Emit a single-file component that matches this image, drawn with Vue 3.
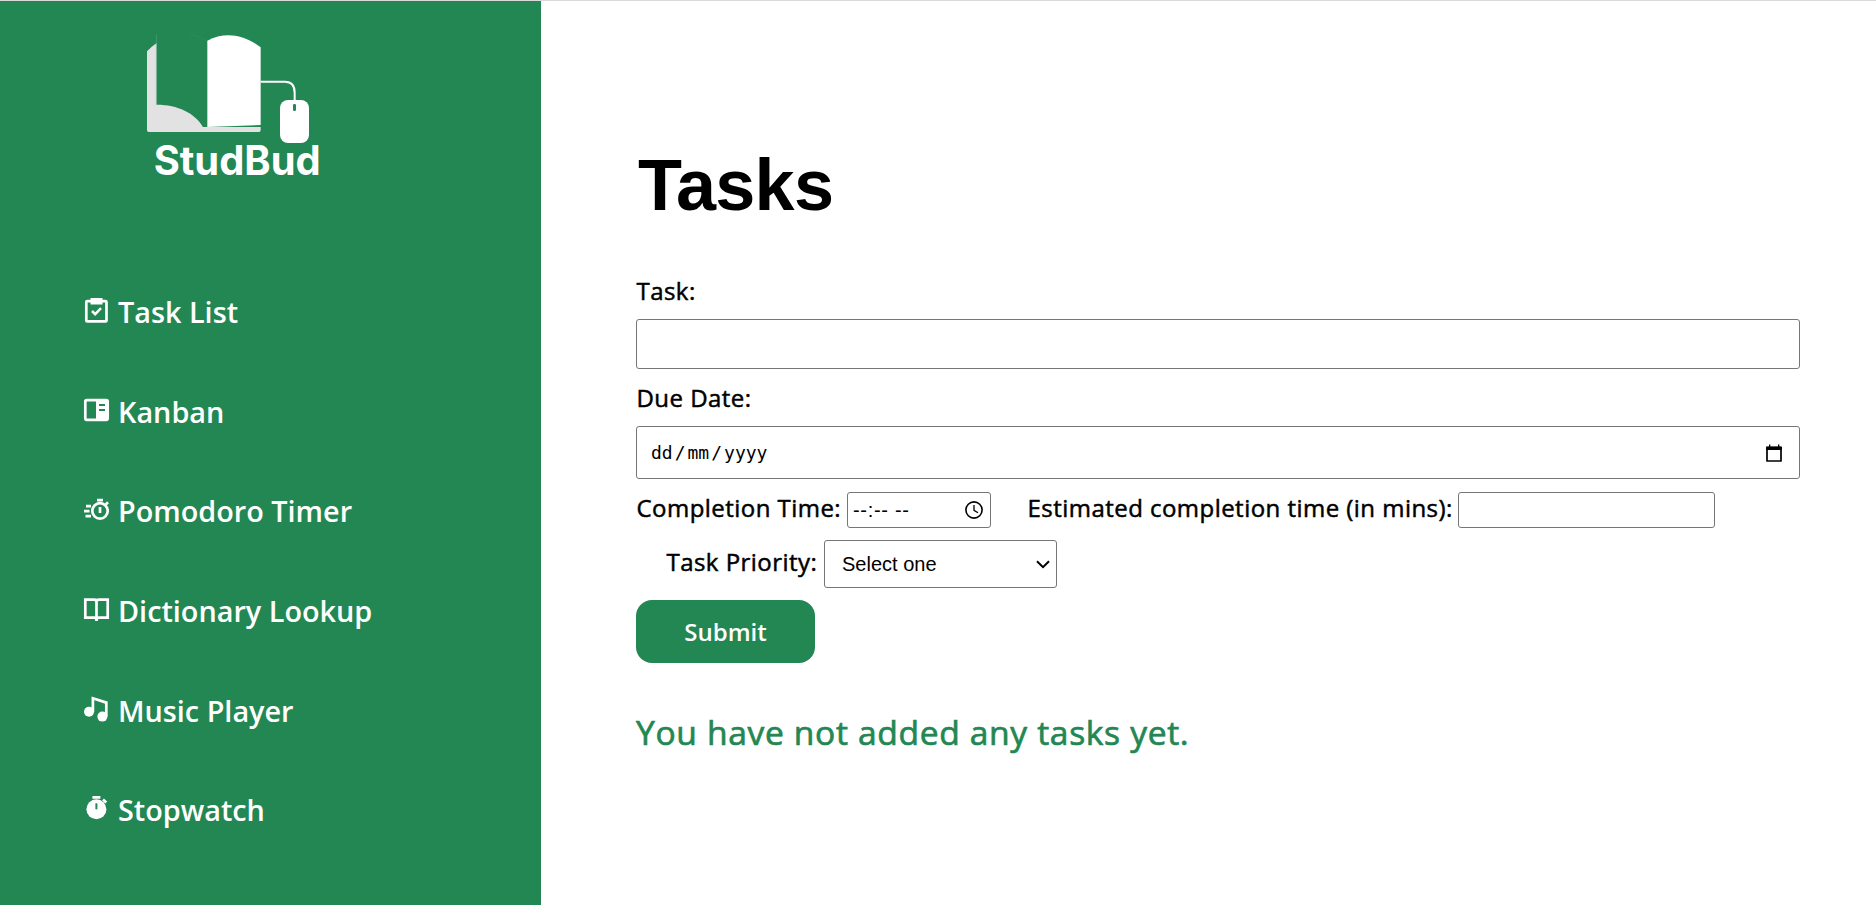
<script setup>
import { ref } from 'vue'

const links = [
  { id: 'tasks', label: 'Task List' },
  { id: 'kanban', label: 'Kanban' },
  { id: 'pomodoro', label: 'Pomodoro Timer' },
  { id: 'dictionary', label: 'Dictionary Lookup' },
  { id: 'music', label: 'Music Player' },
  { id: 'stopwatch', label: 'Stopwatch' },
]
const task = ref('')
const estimate = ref('')
</script>

<template>
  <div class="page">
    <aside class="sidebar">
      <svg class="logo" viewBox="0 0 630 510" role="img" aria-label="StudBud">
        <path d="M51 94Q64 80 80 69V254C143 254 195 279 219 321H392V331Q392 336 387 336H56Q51 336 51 331Z" fill="#e2e2e2" />
        <path d="M79 42V254" stroke="#5ba580" stroke-width="1.5" />
        <path d="M178 42Q208 50 232 62" fill="none" stroke="#3f9468" stroke-width="1" />
        <path d="M232 62C284 34 340 42 392 82V315L232 321Z" fill="#fff" />
        <path d="M392 185H465Q494 185 494 218V242" fill="none" stroke="#fff" stroke-width="6" />
        <rect x="450" y="240" width="87" height="129" rx="24" fill="#fff" />
        <rect x="489" y="252" width="9" height="21" rx="4" fill="#238753" />
        <text x="71" y="465" textLength="501" lengthAdjust="spacingAndGlyphs" class="logo-text">StudBud</text>
      </svg>
      <nav class="nav">
        <a v-for="link in links" :key="link.id" class="link">
          <svg class="icon" viewBox="0 0 26 26" fill="none" stroke="#fff" stroke-width="2.7">
            <template v-if="link.id === 'tasks'">
              <rect x="2.3" y="4.2" width="20.2" height="20.2" rx="1" />
              <path d="M6.5 1H18.5V7.5H6.5Z" fill="#fff" stroke="none" />
              <path d="M8 14L11.2 17.2L17 11.2" stroke-width="2.5" />
            </template>
            <template v-else-if="link.id === 'kanban'">
              <rect x="1.3" y="4.2" width="22.4" height="19.6" rx="1.5" />
              <path d="M12 4H24V24H12Z" fill="#fff" stroke="none" />
              <path d="M15 9H21M15 14H21" stroke="#238753" stroke-width="2" />
            </template>
            <template v-else-if="link.id === 'pomodoro'">
              <circle cx="16" cy="14.9" r="7.7" />
              <path d="M13 4.1H19M16 11V17M21.7 8.6L24 6.3M2 10.2H7M0 15.2H5.5M1.5 20.2H7" />
            </template>
            <template v-else-if="link.id === 'dictionary'">
              <path d="M1.3 3.7H10.2Q12.5 3.7 12.5 5.5Q12.5 3.7 14.8 3.7H23.7V21.6H15Q12.5 21.6 12.5 24Q12.5 21.6 10 21.6H1.3ZM12.5 5V25" />
            </template>
            <template v-else-if="link.id === 'music'">
              <circle cx="5" cy="16.8" r="5" fill="#fff" stroke="none" />
              <circle cx="18.4" cy="21.6" r="5" fill="#fff" stroke="none" />
              <path d="M8.9 17V3.3L22.3 7.6V21.5" />
            </template>
            <template v-else>
              <circle cx="12.4" cy="14.3" r="10" fill="#fff" stroke="none" />
              <path d="M8.4 2.3H16.4M19 4.5L22.3 7.5" />
              <path d="M12.4 8.3V14.3" stroke="#238753" stroke-width="2" />
            </template>
          </svg>
          <span class="link-label">{{ link.label }}</span>
        </a>
      </nav>
    </aside>

    <main class="main">
      <h1 class="title">Tasks</h1>
      <form class="form" @submit.prevent>
        <label class="label" for="task">Task:</label>
        <input id="task" v-model="task" class="field task" type="text" />
        <span class="label due">Due Date:</span>
        <div class="field date">
          <span class="date-text">dd<i>/</i>mm<i>/</i>yyyy</span>
          <svg class="calendar" viewBox="0 0 20 20">
            <path d="M3 4.5H17V18H3Z" fill="none" stroke="#000" stroke-width="1.7" stroke-linejoin="round" />
            <path d="M2.2 3.5H17.8V7H2.2ZM5 1.5H6.3V4H5ZM14 1.5H15.3V4H14Z" />
          </svg>
        </div>
        <div class="row times">
          <span class="label completion">Completion Time:</span>
          <div class="field time">
            <span class="time-text">--:-- --</span>
            <svg class="clock" viewBox="0 0 20 20" fill="none" stroke="#000" stroke-width="1.6">
              <circle cx="10" cy="10" r="8.1" />
              <path d="M10 5V10.3L14 12.8" stroke-width="1.3" />
            </svg>
          </div>
          <label class="label estimated" for="estimate">Estimated completion time (in mins):</label>
          <input id="estimate" v-model="estimate" class="field estimate" type="text" />
        </div>
        <div class="row priority">
          <span class="label priority-label">Task Priority:</span>
          <div class="field select">
            <span>Select one</span>
            <svg class="chevron" viewBox="0 0 14 9"><path d="M1 1.2L7 7.2L13 1.2" fill="none" stroke="#000" stroke-width="2" /></svg>
          </div>
        </div>
        <button class="submit" type="submit">Submit</button>
      </form>
      <p class="empty">You have not added any tasks yet.</p>
    </main>
  </div>
</template>

<style>
body {
  background: #fff;
}
</style>

<style scoped>
.page {
  box-sizing: border-box;
  display: flex;
  height: 905px;
  overflow: hidden;
  border-top: 1px solid #dadada;
  font-family: "Open Sans", "Noto Sans", sans-serif;
  color: #000;
}
.sidebar {
  flex: none;
  width: 541px;
  background: #238753;
}
.logo {
  display: block;
  width: 210px;
  height: 170px;
  margin: 19px 0 0 130px;
}
.logo-text {
  font: 700 121px Inter, sans-serif;
  fill: #fff;
}
.nav {
  display: flex;
  flex-direction: column;
  padding: 72.5px 0 0 84px;
}
.link {
  display: flex;
  align-items: center;
  height: 99.6px;
  color: #fff;
}
.icon {
  flex: none;
  width: 26px;
  height: 26px;
  margin: 0 8px 5px 0;
  overflow: visible;
}
.link-label {
  font-size: 28.8px;
  font-weight: 600;
  line-height: 40px;
  white-space: nowrap;
}
.main {
  flex: 1;
  padding: 140px 76px 0 95px;
}
.title {
  height: 86px;
  margin: 0;
  padding-left: 2px;
  font: 700 72px/89px "Liberation Sans", Arial, sans-serif;
  letter-spacing: -0.7px;
}
.form {
  display: flex;
  flex-direction: column;
  align-items: flex-start;
  padding-top: 48px;
}
.label {
  flex: none;
  padding-left: 0.5px;
  box-sizing: border-box;
  font-size: 24px;
  font-weight: 500;
  line-height: 32px;
  letter-spacing: 0.46px;
  -webkit-text-stroke: 0.5px currentColor;
  white-space: nowrap;
}
.field {
  box-sizing: border-box;
  border: 1px solid #767676;
  border-radius: 3px;
  background: #fff;
}
.task {
  width: 100%;
  height: 50px;
  margin-top: 12px;
}
.due {
  margin-top: 13px;
}
.date {
  display: flex;
  align-items: center;
  justify-content: space-between;
  width: 100%;
  height: 53px;
  margin-top: 12px;
  padding: 0 15px 0 14px;
}
.date-text {
  font: 18px "DejaVu Sans Mono", monospace;
  white-space: nowrap;
}
.date-text i {
  padding: 0 2px;
  font-style: normal;
}
.calendar {
  width: 20px;
  height: 20px;
}
.row {
  display: flex;
  align-items: flex-start;
}
.times {
  height: 36px;
  margin-top: 13px;
}
.completion {
  width: 211px;
}
.time {
  display: flex;
  align-items: center;
  justify-content: space-between;
  width: 144px;
  height: 36px;
  padding: 0 6px 0 5px;
}
.time-text {
  padding-top: 1px;
  font: 20px "Liberation Sans", Arial, sans-serif;
  letter-spacing: 0.7px;
}
.clock {
  width: 20px;
  height: 20px;
}
.estimated {
  width: 431px;
  margin-left: 36px;
}
.estimate {
  width: 257px;
  height: 36px;
}
.priority {
  height: 48px;
  margin-top: 12px;
  padding-left: 30px;
}
.priority-label {
  width: 158px;
  padding-top: 6px;
}
.select {
  display: flex;
  align-items: center;
  justify-content: space-between;
  width: 233px;
  height: 48px;
  padding: 0 6px 0 17px;
  font: 20px "Liberation Sans", Arial, sans-serif;
}
.chevron {
  width: 14px;
  height: 9px;
}
.submit {
  width: 179px;
  height: 63px;
  margin: 12px 0 0;
  padding: 0;
  border: 0;
  border-radius: 16px;
  background: #238753;
  color: #fff;
  font: 600 24px/32px "Open Sans", "Noto Sans", sans-serif;
}
.empty {
  margin: 45px 0 0;
  font-size: 33.6px;
  font-weight: 500;
  line-height: 48px;
  letter-spacing: 0.66px;
  -webkit-text-stroke: 0.7px currentColor;
  color: #238753;
  white-space: nowrap;
}
</style>
